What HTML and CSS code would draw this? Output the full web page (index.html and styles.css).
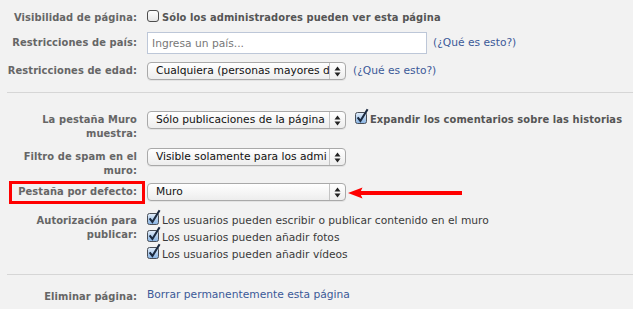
FILE: index.html
```html
<!DOCTYPE html>
<html lang="es">
<head>
    <meta charset="UTF-8">
    <meta name="viewport" content="width=device-width, initial-scale=1.0">
    <title>Configuración de la página</title>
    <link rel="stylesheet" href="styles.css">
</head>
<body>
    <div class="settings">
        <div class="row row-center row-first">
            <div class="label">Visibilidad de página:</div>
            <div class="field">
                <label class="check check-off">
                    <svg width="13" height="13" viewBox="0 0 13 13">
                        <defs>
                            <linearGradient id="off" x1="0" y1="0" x2="0" y2="1">
                                <stop offset="0" stop-color="#ffffff"/>
                                <stop offset="1" stop-color="#e4e4e4"/>
                            </linearGradient>
                        </defs>
                        <rect x="0.5" y="0.5" width="11" height="11" rx="2.5" fill="url(#off)" stroke="#4d4d4d"/>
                    </svg>
                    <span class="strong">Sólo los administradores pueden ver esta página</span>
                </label>
            </div>
        </div>

        <div class="row row-center row-country">
            <div class="label">Restricciones de país:</div>
            <div class="field">
                <input class="text-input" type="text" placeholder="Ingresa un país...">
                <a class="link" href="#">(¿Qué es esto?)</a>
            </div>
        </div>

        <div class="row row-center row-age">
            <div class="label">Restricciones de edad:</div>
            <div class="field">
                <div class="select">
                    <span class="select-text">Cualquiera (personas mayores d</span>
                    <span class="select-arrows"><svg width="7" height="11" viewBox="0 0 7 11"><path d="M0.5 4.5 L3.5 0.5 L6.5 4.5Z M0.5 6.5 L3.5 10.5 L6.5 6.5Z" fill="#222"/></svg></span>
                </div>
                <a class="link link-age" href="#">(¿Qué es esto?)</a>
            </div>
        </div>

        <div class="divider divider-top"></div>

        <div class="row row-wall">
            <div class="label">La pestaña Muro<br>muestra:</div>
            <div class="field">
                <div class="select">
                    <span class="select-text">Sólo publicaciones de la página</span>
                    <span class="select-arrows"><svg width="7" height="11" viewBox="0 0 7 11"><path d="M0.5 4.5 L3.5 0.5 L6.5 4.5Z M0.5 6.5 L3.5 10.5 L6.5 6.5Z" fill="#222"/></svg></span>
                </div>
                <label class="check check-expand">
                    <svg width="14" height="16" viewBox="0 0 14 16">
                        <defs>
                            <linearGradient id="on" x1="0" y1="0" x2="0" y2="1">
                                <stop offset="0" stop-color="#e3eefa"/>
                                <stop offset="1" stop-color="#86b2e2"/>
                            </linearGradient>
                        </defs>
                        <rect x="0.5" y="4.5" width="11" height="11" rx="2" fill="url(#on)" stroke="#4a4f57"/>
                        <path d="M2.6 9.4 L5.4 13 L12.6 1.2" fill="none" stroke="#1b2a40" stroke-width="2.1"/>
                    </svg>
                    <span class="strong">Expandir los comentarios sobre las historias</span>
                </label>
            </div>
        </div>

        <div class="row row-spam">
            <div class="label">Filtro de spam en el<br>muro:</div>
            <div class="field">
                <div class="select">
                    <span class="select-text">Visible solamente para los admi</span>
                    <span class="select-arrows"><svg width="7" height="11" viewBox="0 0 7 11"><path d="M0.5 4.5 L3.5 0.5 L6.5 4.5Z M0.5 6.5 L3.5 10.5 L6.5 6.5Z" fill="#222"/></svg></span>
                </div>
            </div>
        </div>

        <div class="row row-tab">
            <div class="label"><span class="highlight">Pestaña por defecto:</span></div>
            <div class="field field-center">
                <div class="select">
                    <span class="select-text">Muro</span>
                    <span class="select-arrows"><svg width="7" height="11" viewBox="0 0 7 11"><path d="M0.5 4.5 L3.5 0.5 L6.5 4.5Z M0.5 6.5 L3.5 10.5 L6.5 6.5Z" fill="#222"/></svg></span>
                </div>
                <svg class="red-arrow" width="116" height="12" viewBox="0 0 116 12">
                    <path d="M0 6 L14.5 0.5 L12 6 L14.5 11.5Z" fill="#ff0000"/>
                    <rect x="12" y="4" width="102" height="4" fill="#ff0000"/>
                </svg>
            </div>
        </div>

        <div class="row row-post">
            <div class="label label-post">Autorización para<br>publicar:</div>
            <div class="field field-list">
                <label class="check check-on">
                    <svg width="14" height="16" viewBox="0 0 14 16">
                        <rect x="0.5" y="4.5" width="11" height="11" rx="2" fill="url(#on)" stroke="#4a4f57"/>
                        <path d="M2.6 9.4 L5.4 13 L12.6 1.2" fill="none" stroke="#1b2a40" stroke-width="2.1"/>
                    </svg>
                    <span>Los usuarios pueden escribir o publicar contenido en el muro</span>
                </label>
                <label class="check check-on">
                    <svg width="14" height="16" viewBox="0 0 14 16">
                        <rect x="0.5" y="4.5" width="11" height="11" rx="2" fill="url(#on)" stroke="#4a4f57"/>
                        <path d="M2.6 9.4 L5.4 13 L12.6 1.2" fill="none" stroke="#1b2a40" stroke-width="2.1"/>
                    </svg>
                    <span>Los usuarios pueden añadir fotos</span>
                </label>
                <label class="check check-on">
                    <svg width="14" height="16" viewBox="0 0 14 16">
                        <rect x="0.5" y="4.5" width="11" height="11" rx="2" fill="url(#on)" stroke="#4a4f57"/>
                        <path d="M2.6 9.4 L5.4 13 L12.6 1.2" fill="none" stroke="#1b2a40" stroke-width="2.1"/>
                    </svg>
                    <span>Los usuarios pueden añadir vídeos</span>
                </label>
            </div>
        </div>

        <div class="divider divider-bottom"></div>

        <div class="row row-delete">
            <div class="label">Eliminar página:</div>
            <div class="field">
                <a class="link" href="#">Borrar permanentemente esta página</a>
            </div>
        </div>
    </div>
</body>
</html>
```

FILE: styles.css
```css
body {
    margin: 0;
    background-color: #f2f2f2;
    font-family: 'DejaVu Sans', sans-serif;
    font-size: 10.7px;
    line-height: 14px;
    color: #3a3a3a;
}

.settings {
    padding: 11px 0 0 7px;
}

.row {
    display: flex;
    align-items: flex-start;
}

.row-center {
    align-items: center;
}

.label {
    width: 130px;
    flex: none;
    text-align: right;
    padding-top: 2px;
    font-family: 'DejaVu Sans Condensed', 'DejaVu Sans', sans-serif;
    font-weight: bold;
    font-size: 11px;
    letter-spacing: 0.1px;
    color: #666;
    white-space: nowrap;
}

.row-center .label {
    padding-top: 0;
}

.field {
    margin-left: 10px;
    display: flex;
    align-items: flex-start;
    white-space: nowrap;
}

.row-center .field,
.field-center {
    align-items: center;
}

.strong {
    font-family: 'DejaVu Sans Condensed', 'DejaVu Sans', sans-serif;
    font-weight: bold;
    font-size: 11px;
    letter-spacing: 0.1px;
    color: #555;
}

/* vertical rhythm */
.row-country { margin-top: 7px; }
.row-age { margin-top: 8px; }
.divider-top { margin-top: 12px; }
.row-wall { margin-top: 18px; }
.row-spam { margin-top: 7px; }
.row-tab { margin-top: 5px; }
.row-post { margin-top: 10px; }
.divider-bottom { margin-top: 12px; }
.row-delete { margin-top: 13px; }

.divider {
    height: 1px;
    background-color: #d6d6d6;
}

.check {
    display: flex;
    align-items: flex-start;
    gap: 1px;
    line-height: 14px;
}

.check svg {
    flex: none;
    margin-top: -5px;
}

.check-off svg {
    margin-top: -1px;
    margin-right: 1px;
}

.check-expand {
    margin-left: 9px;
    margin-top: 2px;
}

.field-list {
    flex-direction: column;
    gap: 3px;
    padding-top: 3px;
}

.label-post {
    padding-top: 3px;
}

.text-input {
    box-sizing: border-box;
    width: 280px;
    height: 22px;
    margin: 0;
    padding: 0 4px;
    border: 1px solid #bdc7d8;
    background-color: #fff;
    font-family: 'DejaVu Sans', sans-serif;
    font-size: 10.7px;
    color: #333;
}

.text-input::placeholder {
    color: #777;
}

.link {
    color: #3b5998;
    text-decoration: none;
    margin-left: 6px;
}

.link-age {
    margin-left: 7px;
}

.row-delete .link {
    margin-left: 0;
}

.select {
    box-sizing: border-box;
    display: flex;
    width: 199px;
    height: 18px;
    border: 1px solid #a9a9a9;
    border-radius: 4px;
    background: linear-gradient(#ffffff, #ededed);
    box-shadow: 0 1px 0 rgba(0, 0, 0, 0.06);
    overflow: hidden;
}

.select-text {
    flex: 1;
    padding: 0 3px 0 8px;
    line-height: 16px;
    color: #111;
    overflow: hidden;
    white-space: nowrap;
}

.select-arrows {
    flex: none;
    width: 15px;
    border-left: 1px solid #c4c4c4;
    display: flex;
    align-items: center;
    justify-content: center;
}

.highlight {
    display: inline-block;
    padding: 1px 5px 2px 6px;
    margin: -1px -5px -2px -6px;
    outline: 3px solid #ff0000;
}

.red-arrow {
    flex: none;
    margin-left: 2px;
    margin-top: 2px;
}
```
